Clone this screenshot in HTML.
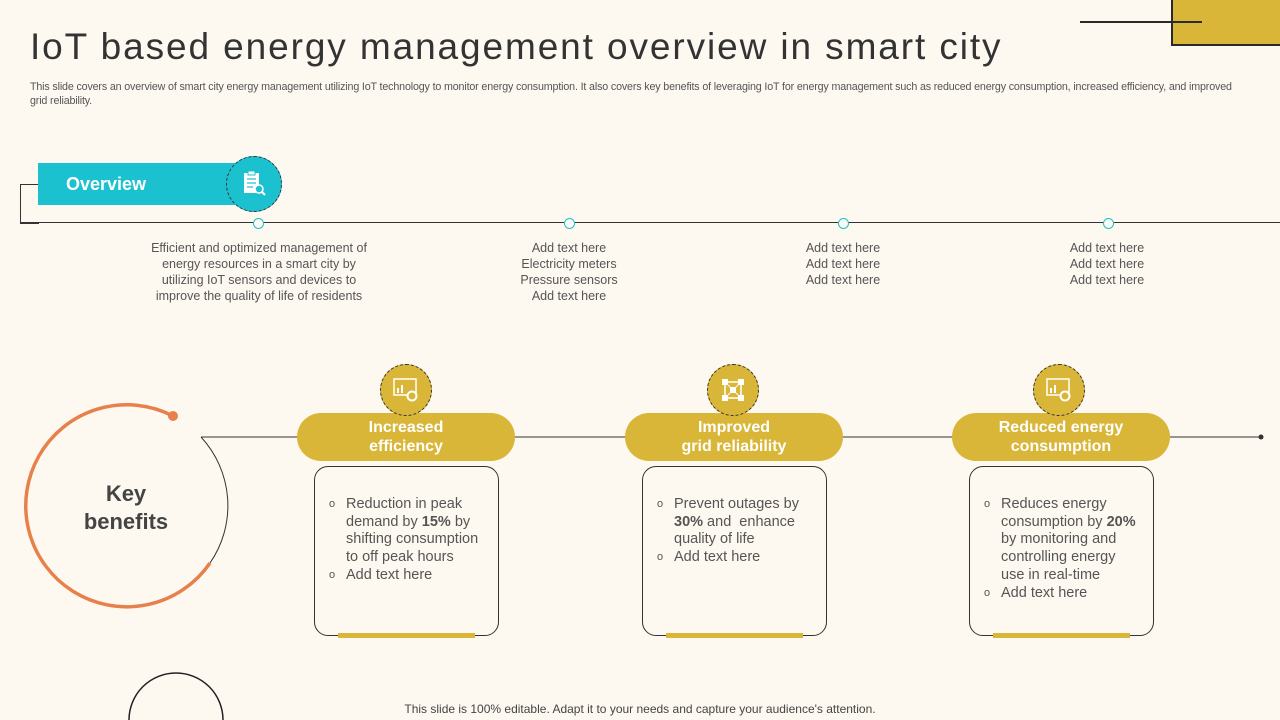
<!DOCTYPE html>
<html><head><style>
html,body{margin:0;width:1280px;height:720px;overflow:hidden}
body{background:#fdf9f1;position:relative;font-family:"Liberation Sans",sans-serif;color:#444}
.a{position:absolute}
.t{position:absolute;text-align:center;font-size:12.5px;line-height:16px;color:#555}
.pill{position:absolute;width:218px;height:48px;border-radius:24px;background:#d9b637;color:#fff;font-weight:bold;font-size:16px;line-height:19px;text-align:center;display:flex;align-items:center;justify-content:center}
.box{position:absolute;width:183px;height:168px;border:1px solid #333;border-radius:14px;top:466px}
.box ul{margin:0;padding:0;list-style:none;position:absolute;left:14px;top:29px;width:155px;font-size:14.5px;line-height:17.7px;color:#555}
.box li{padding-left:17px;position:relative}
.box li:before{content:"o";position:absolute;left:0;font-size:11px}
.bar{position:absolute;left:23px;bottom:-3px;width:137px;height:5px;background:#d9b637}
.ic{position:absolute;width:50px;height:50px;border-radius:50%;background:#d9b637;border:1.5px dashed #333;top:364px}
</style></head><body>
<div class="a" style="left:30px;top:26px;font-size:37px;color:#333;letter-spacing:1.9px;white-space:nowrap">IoT based energy management overview in smart city</div>
<div class="a" style="left:30px;top:80px;width:1215px;font-size:10.7px;line-height:14px;color:#555;letter-spacing:-0.15px">This slide covers an overview of smart city energy management utilizing IoT technology to monitor energy consumption. It also covers key benefits of leveraging IoT for energy management such as reduced energy consumption, increased efficiency, and improved grid reliability.</div>
<div class="a" style="left:1171px;top:0;width:109px;height:46px;background:#d9b637;border:2px solid #2a2a2a;border-top:none;border-right:none;box-sizing:border-box"></div>
<div class="a" style="left:1080px;top:21px;width:122px;height:2px;background:#2a2a2a"></div>

<div class="a" style="left:20px;top:184px;width:18px;height:38px;border:1px solid #333;border-right:none"></div>
<div class="a" style="left:20px;top:222px;width:1260px;height:1px;background:#333"></div>
<div class="a" style="left:38px;top:163px;width:210px;height:42px;background:#1cc1d0;color:#fff;font-weight:bold;font-size:18px;line-height:42px;padding-left:28px;box-sizing:border-box">Overview</div>
<div class="a" style="left:226px;top:156px;width:54px;height:54px;border-radius:50%;background:#1cc1d0;border:1.5px dashed #333"></div>
<svg class="a" style="left:240px;top:170px" width="28" height="28" viewBox="0 0 28 28"><rect x="4" y="3" width="15" height="20" fill="#fff"/><rect x="8" y="1" width="7" height="4" fill="#fff" stroke="#1cc1d0"/><g stroke="#1cc1d0" stroke-width="1.2"><line x1="7" y1="9" x2="16" y2="9"/><line x1="7" y1="13" x2="16" y2="13"/><line x1="7" y1="17" x2="13" y2="17"/></g><circle cx="19" cy="19" r="4" fill="#1cc1d0" stroke="#fff" stroke-width="1.5"/><line x1="22" y1="22" x2="25" y2="25" stroke="#fff" stroke-width="2"/></svg>
<div class="a" style="left:253px;top:218px;width:9px;height:9px;border-radius:50%;border:1px solid #1cc1d0;background:#fdf9f1"></div>
<div class="a" style="left:564px;top:218px;width:9px;height:9px;border-radius:50%;border:1px solid #1cc1d0;background:#fdf9f1"></div>
<div class="a" style="left:838px;top:218px;width:9px;height:9px;border-radius:50%;border:1px solid #1cc1d0;background:#fdf9f1"></div>
<div class="a" style="left:1103px;top:218px;width:9px;height:9px;border-radius:50%;border:1px solid #1cc1d0;background:#fdf9f1"></div>
<div class="t" style="left:143px;top:240px;width:232px">Efficient and optimized management of energy resources in a smart city by utilizing IoT sensors and devices to improve the quality of life of residents</div>
<div class="t" style="left:489px;top:240px;width:160px">Add text here<br>Electricity meters<br>Pressure sensors<br>Add text here</div>
<div class="t" style="left:763px;top:240px;width:160px">Add text here<br>Add text here<br>Add text here</div>
<div class="t" style="left:1027px;top:240px;width:160px">Add text here<br>Add text here<br>Add text here</div>

<svg class="a" style="left:0;top:380px" width="1280" height="340">
<line x1="201" y1="57" x2="1262" y2="57" stroke="#333" stroke-width="1"/>
<circle cx="1261" cy="57" r="2.5" fill="#333"/>
<path d="M201 57 A101 101 0 0 1 210 183" fill="none" stroke="#333" stroke-width="1"/>
<path d="M173 36 A101 101 0 1 0 210 183" fill="none" stroke="#e8804c" stroke-width="3.5"/>
<circle cx="173" cy="36" r="5" fill="#e8804c"/>
<circle cx="176" cy="340" r="47" fill="none" stroke="#222" stroke-width="1.5"/>
</svg>
<div class="a" style="left:56px;top:480px;width:140px;text-align:center;font-weight:bold;font-size:22px;line-height:28px;color:#444">Key<br>benefits</div>

<div class="pill" style="left:297px;top:413px">Increased<br>efficiency</div>
<div class="pill" style="left:625px;top:413px">Improved<br>grid reliability</div>
<div class="pill" style="left:952px;top:413px">Reduced energy<br>consumption</div>
<div class="ic" style="left:380px"></div><div class="ic" style="left:707px"></div><div class="ic" style="left:1033px"></div>
<svg class="a" style="left:393px;top:378px" width="26" height="24"><rect x="1" y="1" width="22" height="16" fill="none" stroke="#fff" stroke-width="1.5"/><rect x="4" y="10" width="2" height="5" fill="#fff"/><rect x="8" y="7" width="2" height="8" fill="#fff"/><circle cx="19" cy="18" r="4.5" fill="#d9b637" stroke="#fff" stroke-width="2"/></svg>
<svg class="a" style="left:720px;top:377px" width="26" height="26"><rect x="5" y="5" width="16" height="16" fill="none" stroke="#fff" stroke-width="1.5"/><line x1="5" y1="5" x2="21" y2="21" stroke="#fff"/><line x1="21" y1="5" x2="5" y2="21" stroke="#fff"/><g fill="#fff"><rect x="2" y="2" width="6" height="6"/><rect x="18" y="2" width="6" height="6"/><rect x="2" y="18" width="6" height="6"/><rect x="18" y="18" width="6" height="6"/><rect x="10" y="10" width="6" height="6"/></g></svg>
<svg class="a" style="left:1046px;top:378px" width="26" height="24"><rect x="1" y="1" width="22" height="16" fill="none" stroke="#fff" stroke-width="1.5"/><rect x="4" y="10" width="2" height="5" fill="#fff"/><rect x="8" y="7" width="2" height="8" fill="#fff"/><circle cx="19" cy="18" r="4.5" fill="#d9b637" stroke="#fff" stroke-width="2"/></svg>

<div class="box" style="left:314px"><ul><li>Reduction in peak demand by <b>15%</b> by shifting consumption to off peak hours</li><li>Add text here</li></ul><div class="bar"></div></div>
<div class="box" style="left:642px"><ul><li>Prevent outages by <b>30%</b> and &nbsp;enhance quality of life</li><li>Add text here</li></ul><div class="bar"></div></div>
<div class="box" style="left:969px"><ul><li>Reduces energy consumption by <b>20%</b> by monitoring and controlling energy use in real-time</li><li>Add text here</li></ul><div class="bar"></div></div>

<div class="a" style="left:0;width:1280px;top:702px;text-align:center;font-size:12px;line-height:14px;color:#444">This slide is 100% editable. Adapt it to your needs and capture your audience's attention.</div>
</body></html>
